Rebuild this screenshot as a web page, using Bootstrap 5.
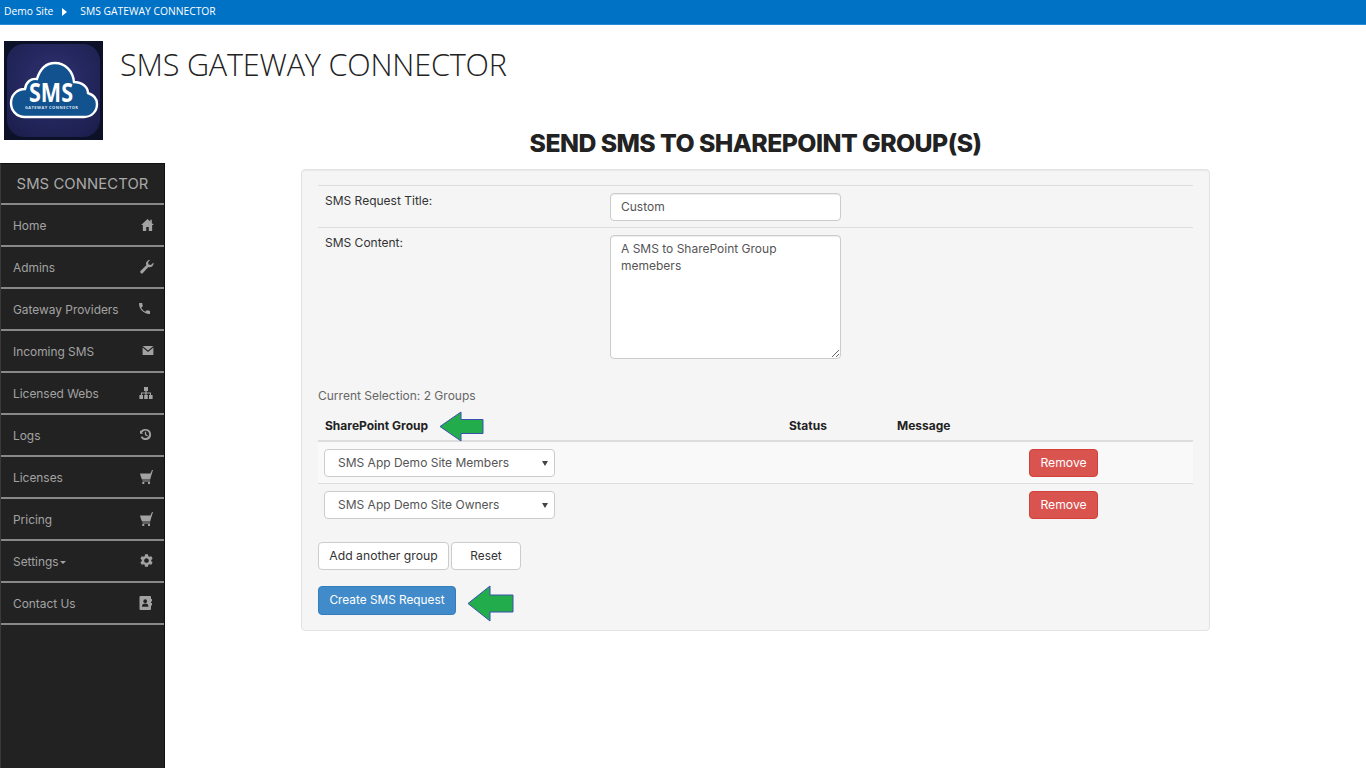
<!DOCTYPE html>
<html lang="en">
<head>
<meta charset="utf-8">
<title>SMS Gateway Connector</title>
<link rel="stylesheet" href="https://cdn.jsdelivr.net/npm/bootstrap@5.3.0/dist/css/bootstrap.min.css">
<style>
html,body{height:100%;overflow:hidden}
body{font-family:"Inter","Open Sans",sans-serif;font-size:12px;color:#333;background:#fff}
.suitebar{height:25px;background:#0072c6;border-bottom:1px solid #2a8dd4;color:#fff;font-family:"Open Sans",sans-serif;font-size:10.3px;padding-left:4px}
.suitebar svg{margin:0 13px 0 9px}
.brandrow{padding:16px 0 0 4px;height:103px}
.brandlogo{width:99px;height:99px;display:block}
.brandtitle{font-family:"Open Sans",sans-serif;font-weight:300;font-size:30.6px;color:#222;margin:0 0 0 17px;line-height:47px;letter-spacing:-.2px}
.pagebody{height:640px}
.sidebox{width:165px;margin-top:35px;background:#222;border-left:1px solid #3a3a3a;border-right:1px solid #111;border-top:1px solid #111;color:#9d9d9d}
.sidehead{height:41px;font-size:14.8px;color:#aaa;border-bottom:2px solid #888;padding-top:1px;letter-spacing:.1px}
.sideitem{height:42px;border-bottom:2px solid #888;padding:2px 10px 0 12px;color:#a2a2a2;text-decoration:none;font-size:11.9px}
.sideitem svg{fill:#a2a2a2;flex:none;margin-top:-3px}
.gap1{margin-right:1px}.gap2{margin-right:2px}.gap3{margin-right:3px}.gap4{margin-right:4px}
.sidecaret{display:inline-block;border-top:3px solid #a2a2a2;border-left:3.5px solid transparent;border-right:3.5px solid transparent;vertical-align:middle;margin-left:1px}
.mainbox{width:909px;margin-left:136px}
.pagehead{font-family:"Inter","Open Sans",sans-serif;font-weight:800;font-size:24.8px;letter-spacing:-.55px;color:#222;text-align:center;height:41px;line-height:30px;margin:0;padding-top:0}
.wellbox{background:#f5f5f5;border:1px solid #e3e3e3;border-radius:4px;padding:15px 16px;height:462px;box-shadow:inset 0 1px 1px rgba(0,0,0,.05)}
.formgrid{--bs-table-bg:transparent;margin:0;table-layout:fixed;width:875px}
.formgrid td{padding:7px 7px 6px;border-top:1px solid #ddd;border-bottom:0;vertical-align:top;color:#333}
.formgrid td:first-child{width:285px;padding-top:6px}
.fieldin{width:231px;height:28px;font-size:12px;padding:4px 10px;border:1px solid #ccc;border-radius:4px;color:#555;box-shadow:inset 0 1px 1px rgba(0,0,0,.075)}
input.fieldin{padding:3px 10px 5px}
textarea.fieldin{height:124px;min-height:124px;line-height:17px}
.selline{margin:22px 0 0;color:#666;height:19px}
.grouptable{--bs-table-bg:transparent;margin:0;table-layout:fixed;width:875px}
.grouptable th{padding:11px 7px 4px;border-bottom:2px solid #ddd;color:#222;font-weight:700;height:35px;vertical-align:top}
.grouptable td{padding:7px 6px 6px;border-bottom:1px solid #ddd;vertical-align:top;height:42px}
.grouptable td.lastcell{padding-left:7px}
.grouptable tr:last-child td{border-bottom:0}
.stripe td{background:#f9f9f9}
.grouphead{gap:11px;height:18px}
.grouphead svg{margin:1px 0 0}
.pickbox{width:231px;height:28px;font-size:12px;padding:3px 14px 3px 13px;border:1px solid #ccc;border-radius:4px;color:#555;background-image:url("data:image/svg+xml,%3Csvg xmlns='http://www.w3.org/2000/svg' viewBox='0 0 6 5'%3E%3Cpath d='M0 0h6L3 5z' fill='%23444'/%3E%3C/svg%3E");background-position:right 6px center;background-size:6px 5px}
.actbtn{font-size:12.2px;height:28px;padding:0 10px;line-height:26px;border-radius:4px}
.whitebtn{background:#fff;border:1px solid #ccc;color:#333}
.widebtn{width:131px;padding:0}
.resetbtn{width:70px;padding:0;font-size:11.8px}
.redbtn{background:#d9534f;border:1px solid #d43f3a;color:#fff;width:69px;padding:0}
.bluebtn{background:#428bca;border:1px solid #357ebd;color:#fff;height:29px;width:138px;padding:0;font-size:11.8px}
.btnline{gap:2px;margin-top:16px}
.submitline{margin-top:16px;gap:11px}
.submitline svg{margin-top:-1px}
</style>
</head>
<body>
<div class="suitebar d-flex align-items-center">
  <span>Demo Site</span>
  <svg width="5" height="8" viewBox="0 0 5 8"><path d="M0 0l5 4-5 4z" fill="#fff"/></svg>
  <span>SMS GATEWAY CONNECTOR</span>
</div>
<div class="brandrow d-flex align-items-start">
  <svg class="brandlogo" viewBox="0 0 99 99">
    <defs>
      <radialGradient id="lg" cx=".5" cy=".4" r=".7"><stop offset="0" stop-color="#2e3172"/><stop offset="1" stop-color="#1c1f4d"/></radialGradient>
    </defs>
    <rect width="99" height="99" fill="#0d1128"/>
    <rect x="3" y="3" width="93" height="93" rx="17" fill="url(#lg)"/>
    <path d="M21 76C12 76 7 69 7 62C7 54 13 48 21 48C22 41 27 37 33 38C36 28 42 22 51 22C61 22 69 30 70 41C78 41 84 46 84 52C90 54 93 58 93 63C93 71 87 76 80 76Z" fill="#12528f" stroke="#fff" stroke-width="2.4"/>
    <text x="47" y="61" text-anchor="middle" font-family="Open Sans, sans-serif" font-weight="700" font-size="26" textLength="44" lengthAdjust="spacingAndGlyphs" fill="#fff">SMS</text>
    <text x="47.500" y="67.500" text-anchor="middle" font-family="Open Sans, sans-serif" font-weight="700" font-size="4" textLength="53" fill="#dfe6ef">GATEWAY CONNECTOR</text>
  </svg>
  <h1 class="brandtitle">SMS GATEWAY CONNECTOR</h1>
</div>
<div class="pagebody d-flex">
  <nav class="sidebox d-flex flex-column flex-shrink-0">
    <div class="sidehead d-flex align-items-center justify-content-center">SMS CONNECTOR</div>
    <a class="sideitem d-flex align-items-center justify-content-between" href="#">Home
      <svg width="13" height="12" viewBox="0 0 16 15"><path d="M8 0L0 7.4h2.2V15h4.2v-5h3.2v5h4.2V7.4H16L13.400 5V1h-2v2.200z"/></svg></a>
    <a class="sideitem d-flex align-items-center justify-content-between" href="#">Admins
      <svg width="14" height="15" viewBox="0 0 16 16"><path d="M15.600 4.400a4.600 4.600 0 0 1-6 4.300L3.300 15.300a1.700 1.700 0 0 1-2.500-2.400L7.200 6.500A4.600 4.600 0 0 1 11.700.3L9.200 3l.6 2.600 2.600.7 2.800-2.600c.2.2.4.4.4.7z"/></svg></a>
    <a class="sideitem d-flex align-items-center justify-content-between" href="#">Gateway Providers
      <svg class="gap4" width="11" height="11" viewBox="3 3 18 18"><path d="M6.600 10.800c1.400 2.800 3.800 5.100 6.600 6.600l2.200-2.200c.3-.3.7-.4 1-.2 1.100.4 2.300.6 3.600.6.600 0 1 .4 1 1V20c0 .6-.4 1-1 1C10.600 21 3 13.400 3 4c0-.6.4-1 1-1h3.500c.6 0 1 .4 1 1 0 1.300.2 2.500.6 3.600.1.300 0 .7-.2 1z"/></svg></a>
    <a class="sideitem d-flex align-items-center justify-content-between" href="#">Incoming SMS
      <svg width="12" height="9" viewBox="0 0 12 10"><path d="M0 0h12L6 5z"/><path d="M0 1.800l6 5 6-5V10H0z"/></svg></a>
    <a class="sideitem d-flex align-items-center justify-content-between" href="#">Licensed Webs
      <svg class="gap1" width="14" height="12" viewBox="0 0 14 12"><path d="M5 0h4v4H7.600v1.400H12V8h1.600v4h-3.600V8h1V6.400H7.600V8h1.200v4H5.200V8h1.200V6.400H3V8h1v4H.4V8H2V5.400h4.400V4H5z"/></svg></a>
    <a class="sideitem d-flex align-items-center justify-content-between" href="#">Logs
      <svg class="gap3" width="11" height="11" viewBox="0 0 12 12"><path d="M6 0a6 6 0 1 1-5.300 8.800l1.700-.9A4.100 4.100 0 1 0 2.200 4l1.300 1.200H0V1.400l.9.9A6 6 0 0 1 6 0zm-.7 3h1.400v2.800l2 1.200-.7 1.100-2.700-1.600z"/></svg></a>
    <a class="sideitem d-flex align-items-center justify-content-between" href="#">Licenses
      <svg class="gap1" width="13" height="14" viewBox="0 0 13 14"><path d="M0 3.400h10.400L12 0h1l-2 6.600-.8 3H2L.8 6.600zM2.500 10.400h7.600v1H2.500zM2.300 12h2v2h-2zM8 12h2v2H8z"/></svg></a>
    <a class="sideitem d-flex align-items-center justify-content-between" href="#">Pricing
      <svg class="gap1" width="13" height="14" viewBox="0 0 13 14"><path d="M0 3.400h10.400L12 0h1l-2 6.600-.8 3H2L.8 6.600zM2.500 10.400h7.600v1H2.500zM2.300 12h2v2h-2zM8 12h2v2H8z"/></svg></a>
    <a class="sideitem d-flex align-items-center justify-content-between" href="#"><span>Settings<span class="sidecaret"></span></span>
      <svg class="gap1" width="13" height="13" viewBox="2.500 2 19 20"><path d="M19.140 12.940c.04-.3.06-.61.06-.94 0-.32-.02-.64-.07-.94l2.030-1.580a.49.49 0 0 0 .12-.61l-1.920-3.320a.49.49 0 0 0-.59-.22l-2.390.96c-.5-.38-1.030-.7-1.620-.94l-.36-2.540a.48.48 0 0 0-.48-.41h-3.840c-.24 0-.43.17-.47.41l-.36 2.540c-.59.24-1.130.57-1.620.94l-2.390-.96c-.22-.08-.47 0-.59.22L2.740 8.870c-.12.21-.08.47.12.61l2.030 1.580c-.05.3-.09.63-.09.94s.02.64.07.94l-2.030 1.580a.49.49 0 0 0-.12.61l1.920 3.320c.12.22.37.29.59.22l2.390-.96c.5.38 1.030.7 1.620.94l.36 2.540c.05.24.24.41.48.41h3.840c.24 0 .44-.17.47-.41l.36-2.540c.59-.24 1.130-.56 1.620-.94l2.390.96c.22.08.47 0 .59-.22l1.920-3.320c.12-.22.07-.47-.12-.61l-2.010-1.580zM12 15.600c-1.980 0-3.600-1.620-3.600-3.600s1.620-3.600 3.600-3.600 3.600 1.620 3.600 3.600-1.620 3.600-3.600 3.600z"/></svg></a>
    <a class="sideitem d-flex align-items-center justify-content-between" href="#">Contact Us
      <svg class="gap2" width="13" height="14" viewBox="0 0 13 14"><path fill-rule="evenodd" d="M1.500 0h9.500A1 1 0 0 1 12 1v2h1v2.500h-1v1.500h1v2.500h-1V13a1 1 0 0 1-1 1H1.500a1 1 0 0 1-1-1V1a1 1 0 0 1 1-1zM6.200 3.300a1.900 1.900 0 1 0 0 3.800 1.900 1.900 0 0 0 0-3.800zM3 10.800h6.400c0-2-1-3.200-3.200-3.200S3 8.800 3 10.800z"/></svg></a>
  </nav>
  <main class="mainbox">
    <h2 class="pagehead">SEND SMS TO SHAREPOINT GROUP(S)</h2>
    <div class="wellbox">
      <table class="table formgrid">
        <tbody>
          <tr><td>SMS Request Title:</td><td><input class="form-control fieldin" type="text" value="Custom" aria-label="SMS Request Title"></td></tr>
          <tr><td>SMS Content:</td><td><textarea class="form-control fieldin" aria-label="SMS Content">A SMS to SharePoint Group memebers</textarea></td></tr>
        </tbody>
      </table>
      <p class="selline">Current Selection: 2 Groups</p>
      <table class="table grouptable">
        <colgroup><col style="width:464px"><col style="width:108px"><col style="width:132px"><col style="width:171px"></colgroup>
        <thead>
          <tr>
            <th><span class="d-flex align-items-center grouphead">SharePoint Group
              <svg width="45" height="31" viewBox="0 0 45 31"><path d="M1 15.500L22 1v7.500h22v14H22V30z" fill="#22ac4b" stroke="#3c4fb0"/></svg></span></th>
            <th>Status</th><th>Message</th><th></th>
          </tr>
        </thead>
        <tbody>
          <tr class="stripe">
            <td><select class="form-select pickbox" aria-label="Group 1"><option>SMS App Demo Site Members</option></select></td>
            <td></td><td></td><td class="lastcell"><button class="btn actbtn redbtn" type="button">Remove</button></td>
          </tr>
          <tr>
            <td><select class="form-select pickbox" aria-label="Group 2"><option>SMS App Demo Site Owners</option></select></td>
            <td></td><td></td><td class="lastcell"><button class="btn actbtn redbtn" type="button">Remove</button></td>
          </tr>
        </tbody>
      </table>
      <div class="d-flex btnline">
        <button class="btn actbtn whitebtn widebtn" type="button">Add another group</button>
        <button class="btn actbtn whitebtn resetbtn" type="button">Reset</button>
      </div>
      <div class="d-flex align-items-start submitline">
        <button class="btn actbtn bluebtn" type="button">Create SMS Request</button>
        <svg width="47" height="37" viewBox="0 0 47 37"><path d="M1 18.500L23 1v9h23v17H23v9z" fill="#22ac4b" stroke="#3c4fb0"/></svg>
      </div>
    </div>
  </main>
</div>
<script src="https://cdn.jsdelivr.net/npm/bootstrap@5.3.0/dist/js/bootstrap.bundle.min.js"></script>
</body>
</html>
